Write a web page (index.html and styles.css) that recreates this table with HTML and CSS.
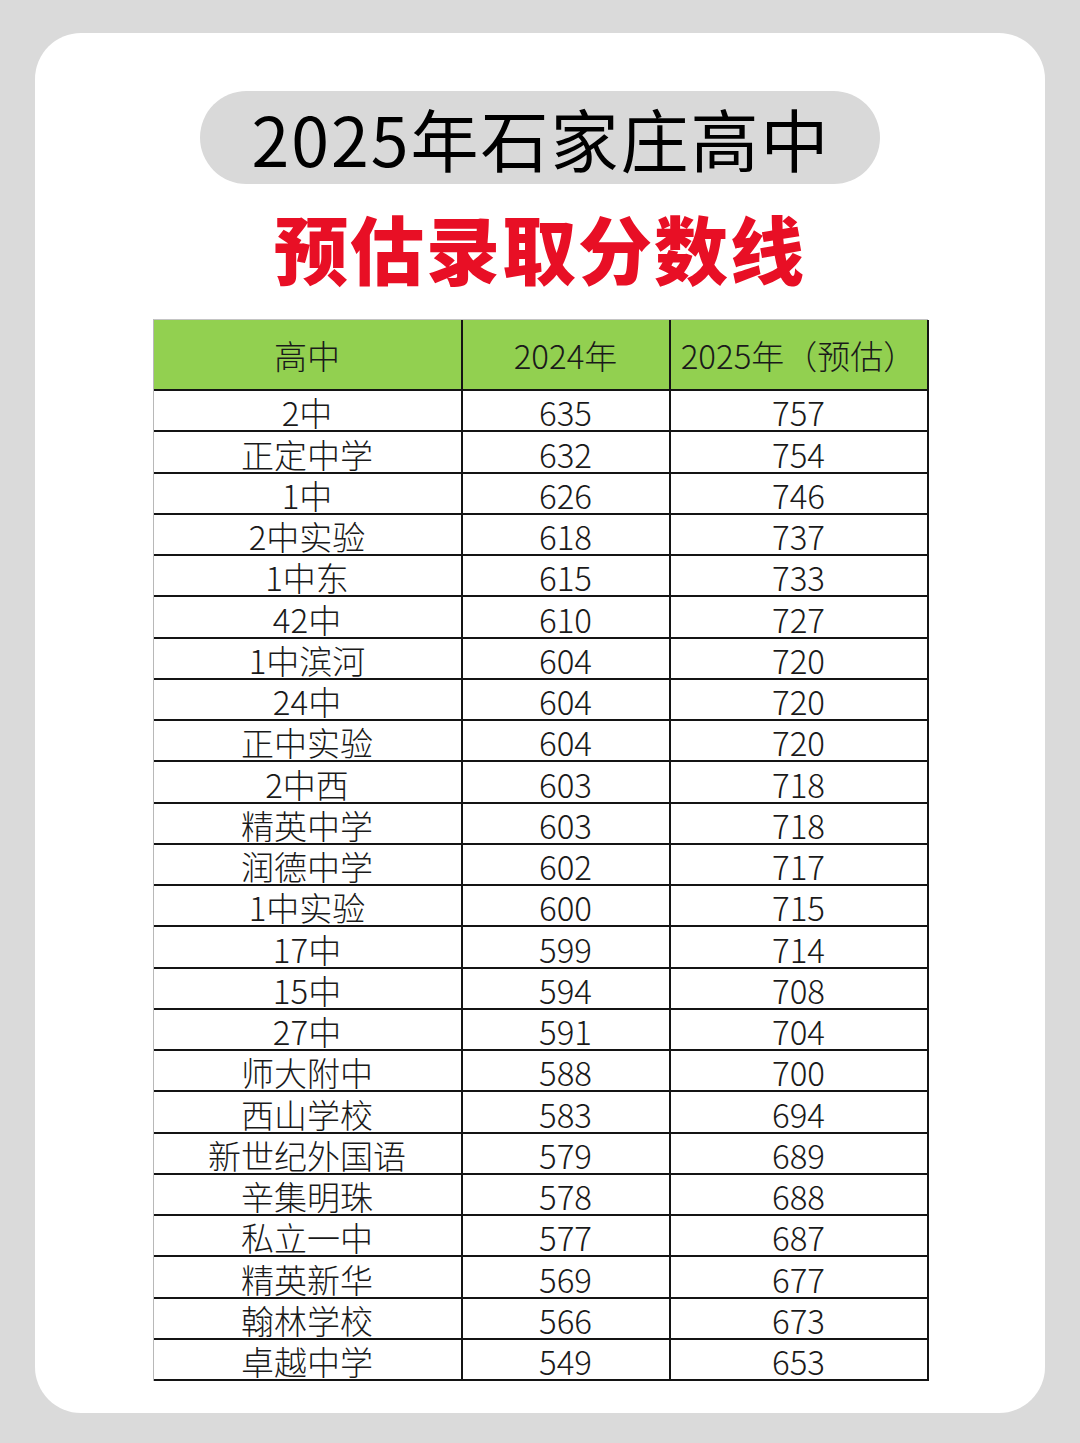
FILE: index.html
```html
<!DOCTYPE html>
<html lang="zh-CN">
<head>
<meta charset="utf-8">
<link rel="stylesheet" href="styles.css">
</head>
<body>
<div class="card">
  <div class="pill"><span class="pill-text">2025年石家庄高中</span></div>
  <h1 class="red-title">预估录取分数线</h1>
  <div class="grid" id="grid">
    <div class="cell head">高中</div>
    <div class="cell head">2024年</div>
    <div class="cell head">2025年（预估）</div>
    <div class="cell">2中</div><div class="cell">635</div><div class="cell">757</div>
    <div class="cell">正定中学</div><div class="cell">632</div><div class="cell">754</div>
    <div class="cell">1中</div><div class="cell">626</div><div class="cell">746</div>
    <div class="cell">2中实验</div><div class="cell">618</div><div class="cell">737</div>
    <div class="cell">1中东</div><div class="cell">615</div><div class="cell">733</div>
    <div class="cell">42中</div><div class="cell">610</div><div class="cell">727</div>
    <div class="cell">1中滨河</div><div class="cell">604</div><div class="cell">720</div>
    <div class="cell">24中</div><div class="cell">604</div><div class="cell">720</div>
    <div class="cell">正中实验</div><div class="cell">604</div><div class="cell">720</div>
    <div class="cell">2中西</div><div class="cell">603</div><div class="cell">718</div>
    <div class="cell">精英中学</div><div class="cell">603</div><div class="cell">718</div>
    <div class="cell">润德中学</div><div class="cell">602</div><div class="cell">717</div>
    <div class="cell">1中实验</div><div class="cell">600</div><div class="cell">715</div>
    <div class="cell">17中</div><div class="cell">599</div><div class="cell">714</div>
    <div class="cell">15中</div><div class="cell">594</div><div class="cell">708</div>
    <div class="cell">27中</div><div class="cell">591</div><div class="cell">704</div>
    <div class="cell">师大附中</div><div class="cell">588</div><div class="cell">700</div>
    <div class="cell">西山学校</div><div class="cell">583</div><div class="cell">694</div>
    <div class="cell">新世纪外国语</div><div class="cell">579</div><div class="cell">689</div>
    <div class="cell">辛集明珠</div><div class="cell">578</div><div class="cell">688</div>
    <div class="cell">私立一中</div><div class="cell">577</div><div class="cell">687</div>
    <div class="cell">精英新华</div><div class="cell">569</div><div class="cell">677</div>
    <div class="cell">翰林学校</div><div class="cell">566</div><div class="cell">673</div>
    <div class="cell">卓越中学</div><div class="cell">549</div><div class="cell">653</div>
  </div>
</div>
</body>
</html>
```

FILE: styles.css
```css
html, body {
  margin: 0;
  padding: 0;
}
body {
  background: #dadada;
  width: 1080px;
  height: 1443px;
  overflow: hidden;
  font-family: "Noto Sans CJK SC", "Noto Sans", sans-serif;
}
.card {
  box-sizing: border-box;
  margin: 33px 0 0 35px;
  width: 1010px;
  height: 1380px;
  background: #ffffff;
  border-radius: 46px;
  padding-top: 58px;
  display: flex;
  flex-direction: column;
  align-items: center;
}
.pill {
  width: 680px;
  height: 93px;
  border-radius: 47px;
  background: #d9d9d9;
  display: flex;
  align-items: center;
  justify-content: center;
}
.pill-text {
  font-size: 68px;
  font-weight: 400;
  color: #000;
  letter-spacing: 2px;
  line-height: 1;
  margin-left: 2px;
}
.red-title {
  margin: 26px 0 0 0;
  font-size: 74px;
  font-weight: 900;
  line-height: 1;
  color: #e80f25;
  letter-spacing: 2px;
  height: 84px;
}
.grid {
  margin-top: 25px;
  width: 775px;
  height: 1062px;
  box-sizing: border-box;
  display: grid;
  grid-template-columns: 309px 208px 258px;
  grid-template-rows: 71px repeat(24, 1fr);
  border-left: 1px solid #b8b8b8;
  border-top: 1px solid #c4c4c4;
}
.cell {
  box-sizing: border-box;
  border-right: 2px solid #141414;
  border-bottom: 2px solid #141414;
  display: flex;
  justify-content: center;
  align-items: flex-end;
  font-size: 33px;
  line-height: 34px;
  color: #1a1a1a;
  font-weight: 300;
  white-space: nowrap;
  padding-bottom: 1px;
}
.head {
  background: #92d050;
  align-items: center;
  padding-bottom: 0;
}
```
